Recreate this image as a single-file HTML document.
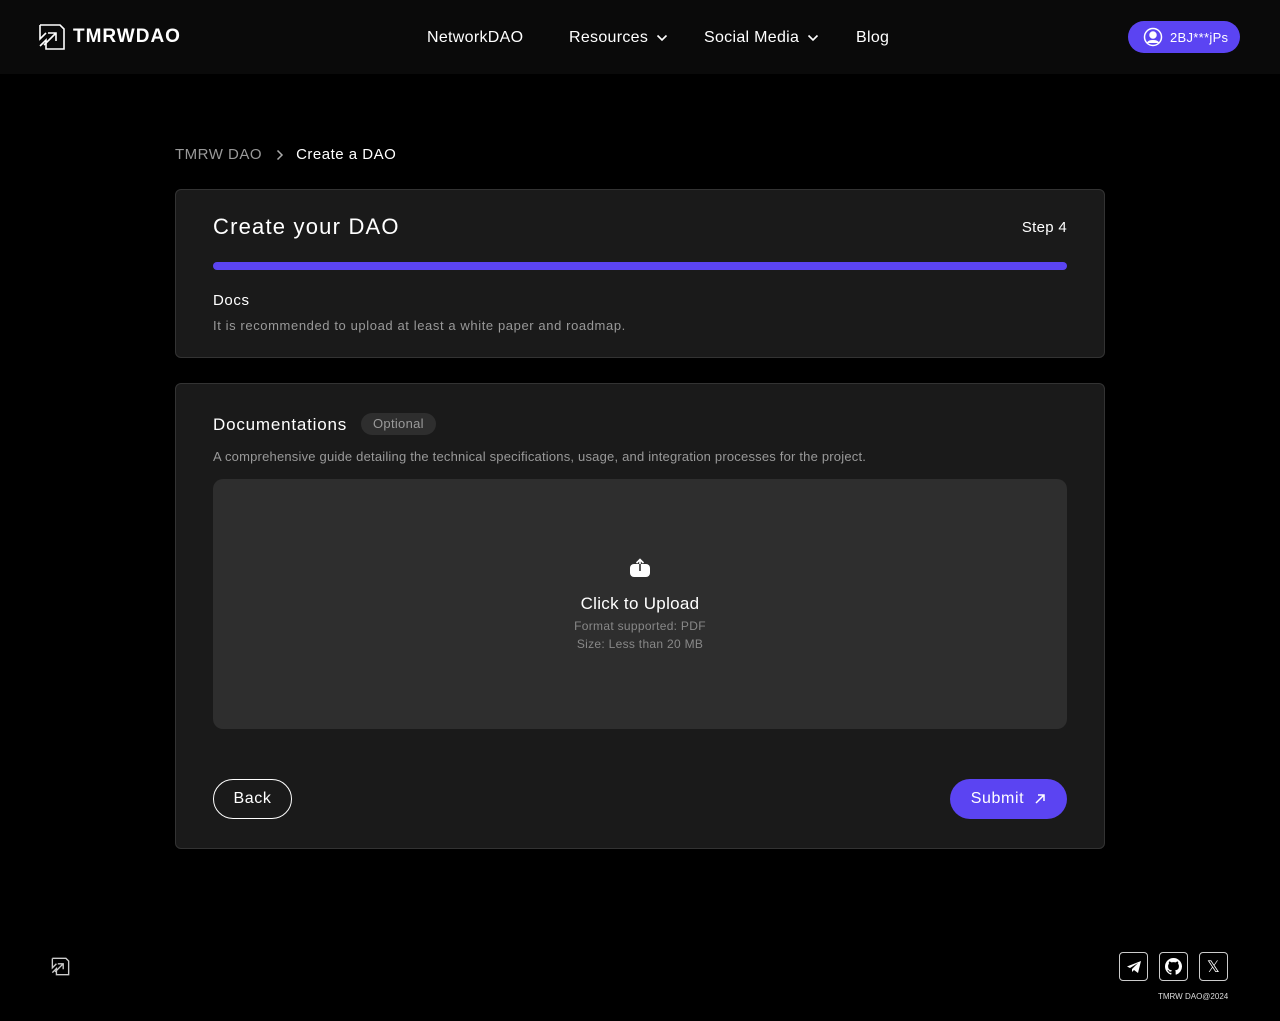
<!DOCTYPE html>
<html><head><meta charset="utf-8"><style>
*{box-sizing:border-box;margin:0;padding:0}
body{width:1280px;height:1021px;background:#000;color:#fff;font-family:"Liberation Sans",sans-serif;position:relative;overflow:hidden;letter-spacing:0.3px}
.hdr{position:absolute;left:0;top:0;width:1280px;height:74px;background:#0a0a0a}
.logo{position:absolute;left:38px;top:23px;display:flex;align-items:center;gap:7px;font-weight:bold;font-size:19px;letter-spacing:1px}
.nav{position:absolute;top:29px;font-size:16px;color:#fff;display:flex;align-items:center;gap:8px;letter-spacing:0.3px}
.wallet{position:absolute;left:1128px;top:21px;width:112px;height:32px;border-radius:16px;background:#5b44f2;display:flex;align-items:center;padding-left:15px;gap:7px;font-size:13px}
.crumb{position:absolute;left:175px;top:146px;font-size:15px;color:#999;display:flex;align-items:center;letter-spacing:0.5px}
.card{position:absolute;left:175px;width:930px;background:#1a1a1a;border:1px solid #333;border-radius:6px}
.up{position:absolute;left:37px;top:95px;width:854px;height:250px;background:#2e2e2e;border-radius:10px;text-align:center}
.btn{position:absolute;height:40px;border-radius:20px;font-size:16px;display:flex;align-items:center;justify-content:center;letter-spacing:0.6px}
.sq{width:29px;height:29px;border:1px solid #ccc;border-radius:4px;display:flex;align-items:center;justify-content:center}
</style></head><body>
<div class="hdr">
<div class="logo"><svg width="28" height="28" viewBox="0 0 28 28" fill="none" stroke="#fff" stroke-width="1.6"><path d="M2 2h20l4 4v20H8v-9l-6 6"/><path d="M2 2v14l6-6"/><path d="M6 22L18 10M10 10h8v8"/></svg>TMRWDAO</div>
<div class="nav" style="left:427px">NetworkDAO</div>
<div class="nav" style="left:569px">Resources <svg width="12" height="8" viewBox="0 0 12 8" fill="none" stroke="#fff" stroke-width="1.6"><path d="M1.5 1.5L6 6l4.5-4.5"/></svg></div>
<div class="nav" style="left:704px">Social Media <svg width="12" height="8" viewBox="0 0 12 8" fill="none" stroke="#fff" stroke-width="1.6"><path d="M1.5 1.5L6 6l4.5-4.5"/></svg></div>
<div class="nav" style="left:856px">Blog</div>
<div class="wallet"><svg width="20" height="20" viewBox="0 0 20 20" fill="none" stroke="#fff" stroke-width="1.5"><circle cx="10" cy="10" r="8.5"/><circle cx="10" cy="8" r="3" fill="#fff"/><path d="M4.5 16c1.5-3 9.5-3 11 0" fill="#fff"/></svg>2BJ***jPs</div>
</div>
<div class="crumb">TMRW DAO<svg style="margin:0 12px 0 14px" width="8" height="12" viewBox="0 0 8 12" fill="none" stroke="#aaa" stroke-width="1.5"><path d="M1.5 1.5L6 6l-4.5 4.5"/></svg><span style="color:#fff">Create a DAO</span></div>
<div class="card" style="top:189px;height:169px">
<div style="position:absolute;left:37px;top:24px;font-size:22px;letter-spacing:1.2px">Create your DAO</div>
<div style="position:absolute;right:37px;top:29px;font-size:15px">Step 4</div>
<div style="position:absolute;left:37px;top:72px;width:854px;height:8px;border-radius:4px;background:#5b44f2"></div>
<div style="position:absolute;left:37px;top:102px;font-size:15px;letter-spacing:0.6px">Docs</div>
<div style="position:absolute;left:37px;top:128px;font-size:13px;color:#999;letter-spacing:0.6px">It is recommended to upload at least a white paper and roadmap.</div>
</div>
<div class="card" style="top:383px;height:466px">
<div style="position:absolute;left:37px;top:31px;font-size:17px;letter-spacing:0.8px">Documentations</div>
<div style="position:absolute;left:185px;top:29px;height:22px;padding:0 12px;border-radius:11px;background:#2e2e2e;color:#999;font-size:13px;line-height:22px">Optional</div>
<div style="position:absolute;left:37px;top:65px;font-size:13px;color:#999;letter-spacing:0.2px">A comprehensive guide detailing the technical specifications, usage, and integration processes for the project.</div>
<div class="up">
<svg style="position:absolute;left:417px;top:79px" width="20" height="20" viewBox="0 0 20 20"><rect x="0" y="6" width="20" height="13" rx="4" fill="#fff"/><path d="M10 13V2M6.5 5L10 1.5 13.5 5" stroke="#fff" stroke-width="1.6" fill="none"/><path d="M10 13V6" stroke="#2e2e2e" stroke-width="1.6"/></svg>
<div style="position:absolute;left:0;width:100%;top:115px;font-size:17px;letter-spacing:0.3px">Click to Upload</div>
<div style="position:absolute;left:0;width:100%;top:140px;font-size:12px;color:#888">Format supported: PDF</div>
<div style="position:absolute;left:0;width:100%;top:158px;font-size:12px;color:#888">Size: Less than 20 MB</div>
</div>
<div class="btn" style="left:37px;top:395px;width:79px;border:1px solid #fff">Back</div>
<div class="btn" style="left:774px;top:395px;width:117px;background:#5b44f2">Submit &nbsp;<svg width="12" height="12" viewBox="0 0 12 12" stroke="#fff" stroke-width="1.5" fill="none"><path d="M2 10L10 2M4 2h6v6"/></svg></div>
</div>
<svg style="position:absolute;left:51px;top:957px" width="19" height="19" viewBox="0 0 28 28" fill="none" stroke="#ccc" stroke-width="2"><path d="M2 2h20l4 4v20H8v-9l-6 6"/><path d="M2 2v14l6-6"/><path d="M6 22L18 10M10 10h8v8"/></svg>
<div style="position:absolute;left:1119px;top:952px;display:flex;gap:11px">
<div class="sq"><svg width="16" height="16" viewBox="0 0 16 16"><path d="M1 7.5L15 2l-3 12-4-3-2 2v-3l6-6-8 5z" fill="#fff"/></svg></div>
<div class="sq"><svg width="17" height="17" viewBox="0 0 16 16"><path fill="#fff" d="M8 0C3.58 0 0 3.58 0 8c0 3.54 2.29 6.53 5.47 7.59.4.07.55-.17.55-.38v-1.33c-2.23.48-2.7-1.07-2.7-1.07-.36-.92-.89-1.17-.89-1.17-.73-.5.06-.49.06-.49.8.06 1.23.83 1.23.83.71 1.22 1.87.87 2.33.66.07-.52.28-.87.51-1.07-1.78-.2-3.64-.89-3.64-3.95 0-.87.31-1.59.82-2.15-.08-.2-.36-1.02.08-2.12 0 0 .67-.21 2.2.82a7.6 7.6 0 0 1 4 0c1.53-1.04 2.2-.82 2.2-.82.44 1.1.16 1.92.08 2.12.51.56.82 1.27.82 2.15 0 3.07-1.87 3.75-3.65 3.95.29.25.54.73.54 1.48v2.2c0 .21.15.46.55.38A8 8 0 0 0 16 8c0-4.42-3.58-8-8-8z"/></svg></div>
<div class="sq" style="font-size:16px;color:#fff">&#120143;</div>
</div>
<div style="position:absolute;left:1158px;top:992px;font-size:8px;color:#ddd;letter-spacing:0">TMRW DAO@2024</div>
</body></html>
